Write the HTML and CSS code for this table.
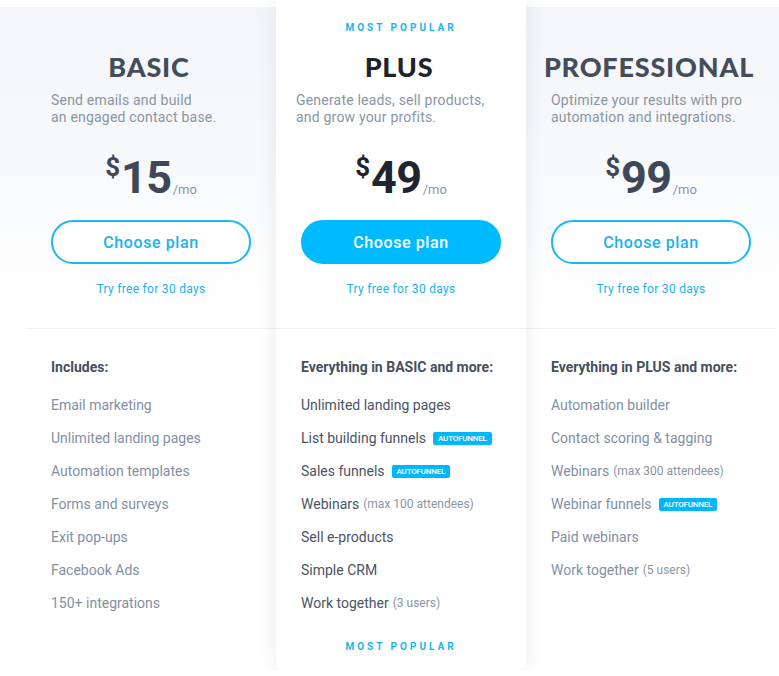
FILE: index.html
```html
<!DOCTYPE html>
<html lang="en">
<head>
<meta charset="utf-8">
<title>Pricing</title>
<link rel="stylesheet" href="styles.css">
</head>
<body>
<section class="pricing">
  <div class="plans">
    <div class="plan">
      <div class="plan-head">
        <div class="tag tag-hidden">MOST POPULAR</div>
        <h2 class="plan-name">BASIC</h2>
        <p class="plan-desc">Send emails and build<br>an engaged contact base.</p>
        <div class="price"><span class="cur">$</span><span class="amount">15</span><span class="per">/mo</span></div>
        <a class="btn btn-outline" href="#">Choose plan</a>
        <div class="trial">Try free for 30 days</div>
      </div>
      <div class="plan-body">
        <div class="includes">Includes:</div>
        <ul class="features">
          <li>Email marketing</li>
          <li>Unlimited landing pages</li>
          <li>Automation templates</li>
          <li>Forms and surveys</li>
          <li>Exit pop-ups</li>
          <li>Facebook Ads</li>
          <li>150+ integrations</li>
        </ul>
      </div>
    </div>

    <div class="plan plan-featured">
      <div class="plan-head">
        <div class="tag">MOST POPULAR</div>
        <h2 class="plan-name">PLUS</h2>
        <p class="plan-desc">Generate leads, sell products,<br>and grow your profits.</p>
        <div class="price"><span class="cur">$</span><span class="amount">49</span><span class="per">/mo</span></div>
        <a class="btn btn-filled" href="#">Choose plan</a>
        <div class="trial">Try free for 30 days</div>
      </div>
      <div class="plan-body">
        <div class="includes">Everything in BASIC and more:</div>
        <ul class="features">
          <li>Unlimited landing pages</li>
          <li>List building funnels <span class="badge">AUTOFUNNEL</span></li>
          <li>Sales funnels <span class="badge">AUTOFUNNEL</span></li>
          <li>Webinars <span class="note">(max 100 attendees)</span></li>
          <li>Sell e-products</li>
          <li>Simple CRM</li>
          <li>Work together <span class="note">(3 users)</span></li>
        </ul>
        <div class="tag tag-bottom">MOST POPULAR</div>
      </div>
    </div>

    <div class="plan">
      <div class="plan-head">
        <div class="tag tag-hidden">MOST POPULAR</div>
        <h2 class="plan-name">PROFESSIONAL</h2>
        <p class="plan-desc">Optimize your results with pro<br>automation and integrations.</p>
        <div class="price"><span class="cur">$</span><span class="amount">99</span><span class="per">/mo</span></div>
        <a class="btn btn-outline" href="#">Choose plan</a>
        <div class="trial">Try free for 30 days</div>
      </div>
      <div class="plan-body">
        <div class="includes">Everything in PLUS and more:</div>
        <ul class="features">
          <li>Automation builder</li>
          <li>Contact scoring &amp; tagging</li>
          <li>Webinars <span class="note">(max 300 attendees)</span></li>
          <li>Webinar funnels <span class="badge">AUTOFUNNEL</span></li>
          <li>Paid webinars</li>
          <li>Work together <span class="note">(5 users)</span></li>
        </ul>
      </div>
    </div>
  </div>
</section>
</body>
</html>
```

FILE: styles.css
```css
* { box-sizing: border-box; }

html, body {
  margin: 0;
  padding: 0;
  background: #ffffff;
}

body {
  font-family: Roboto, "Liberation Sans", Arial, sans-serif;
  color: #3d4757;
  overflow: hidden;
}

.pricing {
  margin-top: 7px;
  background: linear-gradient(to bottom, #f3f5f9 0px, #f6f8fa 120px, #ffffff 300px) no-repeat;
  background-size: 100% 321px;
}

.plans {
  display: grid;
  grid-template-columns: 250px 250px 250px;
  padding-left: 26px;
  align-items: start;
}

.plan-head {
  padding: 0 25px 31px;
  border-bottom: 1px solid #edf0f4;
  display: flex;
  flex-direction: column;
}

.plan-featured .plan-head {
  padding-left: 20px;
}

.plan-featured {
  background: #ffffff;
  margin-top: -7px;
  padding-top: 7px;
  border-radius: 0 0 8px 8px;
  box-shadow: 0 0 18px rgba(50, 70, 100, 0.10);
  position: relative;
  z-index: 1;
}

.tag {
  margin-top: 14px;
  font-size: 10px;
  line-height: 14px;
  font-weight: 700;
  letter-spacing: 3px;
  color: #18b4f2;
  text-align: center;
}

.tag-hidden { visibility: hidden; }

.plan-name {
  margin: 16px -10px 0;
  padding-right: 4px;
  font-family: Lato, "Open Sans", sans-serif;
  font-weight: 900;
  font-size: 27px;
  line-height: 32px;
  letter-spacing: 0.8px;
  color: #434d5b;
  text-align: center;
  white-space: nowrap;
}

.plan-featured .plan-name { color: #1d232c; }

.plan-desc {
  margin: 9px 0 0;
  font-size: 14px;
  line-height: 17px;
  letter-spacing: 0.2px;
  color: #8a95a4;
}

.price {
  margin-top: 28px;
  height: 48px;
  display: flex;
  justify-content: center;
  align-items: flex-start;
  color: #3e4858;
}

.plan-featured .price { color: #1f252e; }

.cur {
  font-size: 26px;
  line-height: 26px;
  font-weight: 700;
  margin-right: 1px;
}

.amount {
  font-size: 45px;
  line-height: 48px;
  font-weight: 700;
  letter-spacing: -0.5px;
}

.per {
  font-size: 13px;
  color: #8a95a4;
  align-self: flex-end;
  line-height: 13px;
  margin-bottom: 6px;
  margin-left: 1px;
}

.btn {
  margin-top: 18px;
  display: flex;
  align-items: center;
  justify-content: center;
  height: 44px;
  width: 200px;
  border-radius: 22px;
  font-size: 16px;
  font-weight: 500;
  letter-spacing: 0.6px;
  text-decoration: none;
}

.plan-featured .plan-head .btn,
.plan-featured .plan-head .trial,
.plan-featured .plan-head .price,
.plan-featured .plan-head .tag { margin-left: 5px; }

.plan-featured .plan-head .plan-name { margin-left: -5px; }

.btn-outline {
  border: 2px solid #1ab8f5;
  color: #19b2ef;
  background: #ffffff;
}

.btn-filled {
  border: 2px solid #00baff;
  background: #00baff;
  color: #ffffff;
}

.trial {
  margin-top: 17px;
  font-size: 12px;
  line-height: 16px;
  letter-spacing: 0.3px;
  color: #1ab2ef;
  text-align: center;
}

.plan-body {
  padding: 28px 25px 16px;
}

.includes {
  font-size: 14px;
  line-height: 20px;
  font-weight: 700;
  color: #454f5d;
}

.features {
  list-style: none;
  margin: 18px 0 0;
  padding: 0;
  display: flex;
  flex-direction: column;
  gap: 13px;
}

.features li {
  font-size: 14px;
  line-height: 20px;
  color: #8290a2;
  display: flex;
  align-items: center;
  white-space: nowrap;
}

.plan-featured .features li { color: #4a5463; }

.note {
  font-size: 12px;
  color: #8a95a4;
  margin-left: 4px;
}

.plan-featured .features li .note { color: #8a95a4; }

.badge {
  display: inline-block;
  margin-left: 7px;
  background: #00b7fb;
  color: #ffffff;
  font-size: 8px;
  font-weight: 500;
  line-height: 13px;
  height: 13px;
  padding: 0 5px;
  letter-spacing: -0.2px;
  border-radius: 2px;
}

.tag-bottom {
  margin-top: 27px;
}
```
